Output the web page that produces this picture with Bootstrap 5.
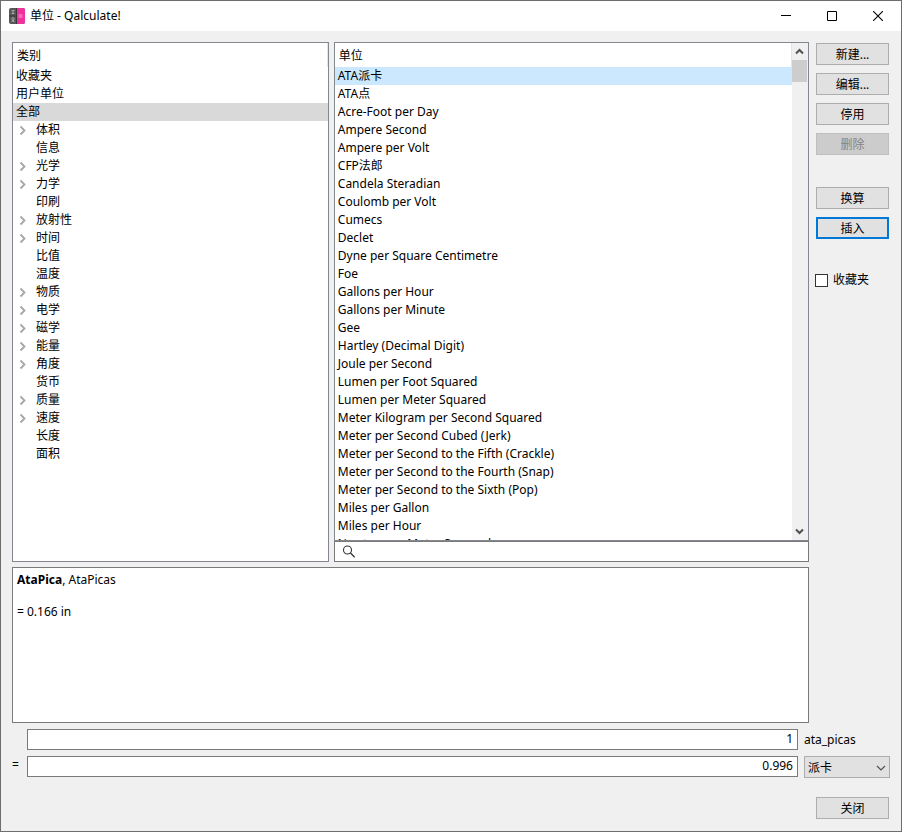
<!DOCTYPE html>
<html lang="zh-CN">
<head>
<meta charset="utf-8">
<meta name="viewport" content="width=device-width, initial-scale=1">
<title>单位 - Qalculate!</title>
<link href="https://cdn.jsdelivr.net/npm/bootstrap@5.3.0/dist/css/bootstrap.min.css" rel="stylesheet">
<style>
  body { font: 12px/18px "Noto Sans", "Noto Sans CJK SC", sans-serif; color: #000; background: #f0f0f0; }
  .window { border: 1px solid #6d6d6d; }
  .titlebar { height: 30px; background: #fff; padding-left: 8px; }
  .app-title { padding-left: 5px; }
  .caption-btn { width: 46px; height: 30px; border: 0; background: transparent; padding: 0; }
  .content { padding: 11px 12px 12px 11px; }
  .main-area { gap: 7px; }
  .panes { display: grid; grid-template-columns: minmax(0, 2fr) minmax(0, 3fr); grid-template-rows: minmax(0, 1fr); column-gap: 5px; }
  .pane { background: #fff; border: 1px solid #828790; }
  .heading { font: inherit; height: 24px; padding: 4px 4px 0; margin: 0; border-right: 1px solid #e5e5e5; }
  .rows .list-group-item { height: 18px; line-height: 18px; padding: 0 3px; border: 0; color: #000; background: #fff; white-space: nowrap; flex: none; display: flex; align-items: center; }
  .rows .picked { background: #cce8ff; }
  .rows .picked-muted { background: #d9d9d9; }
  .rows .twig { width: 20px; height: 18px; flex: none; }
  .scroller { width: 16px; background: #f0f0f0; }
  .scroller button { height: 17px; border: 0; padding: 0; background: transparent; display: flex; justify-content: center; align-items: center; }
  .thumb { height: 22px; background: #cdcdcd; margin-right: 1px; }
  .search { height: 21px; background: #fff; border: 1px solid #7a7a7a; padding: 0 7px; }
  .search input { border: 0; outline: 0; min-width: 0; height: 17px; padding: 0 4px; }
  .side { width: 73px; gap: 8px; padding-top: 1px; }
  .cmd { height: 22px; padding: 1px 0 0; font-size: 12px; line-height: 18px; color: #000; background: #e1e1e1; border: 1px solid #adadad; border-radius: 0; width: 73px; }
  .cmd:disabled { color: #838383; background: #ccc; border-color: #bfbfbf; opacity: 1; }
  .cmd-default { border: 2px solid #0078d7; }
  .convert-gap { margin-top: 24px; }
  .fav { margin: 24px 0 0 -1px; gap: 5px; }
  .fav input { appearance: none; width: 13px; height: 13px; background: #fff; border: 1px solid #333; margin: 0; }
  .fav input:checked { background: #0078d7; }
  .details { height: 156px; background: #fff; border: 1px solid #7a7a7a; padding: 4px; margin: 5px 80px 6px 0; line-height: 16px; }
  .conv { display: grid; grid-template-columns: 15px minmax(0, 1fr) 86px; row-gap: 6px; margin-right: 5px; }
  .conv .value { height: 21px; border: 1px solid #7a7a7a; border-radius: 0; background: #fff; padding: 0 4px 2px; font-size: 12px; line-height: 18px; color: #000; text-align: right; min-width: 0; }
  .conv .unit { margin-left: 6px; width: 86px; }
  .conv label.unit { padding-top: 2px; }
  .conv select { appearance: none; height: 22px; border: 1px solid #adadad; border-radius: 0; padding: 1px 3px 0; font-size: 12px; line-height: 18px; color: #000; background: #e1e1e1; width: 100%; }
  .conv .arrow { right: 4px; top: 7px; pointer-events: none; }
  .closing { margin-top: 19px; }
  svg { display: block; }
</style>
<script src="https://cdn.jsdelivr.net/npm/bootstrap@5.3.0/dist/js/bootstrap.bundle.min.js"></script>
</head>
<body>
<div class="window vh-100 d-flex flex-column overflow-hidden">
  <header class="titlebar d-flex align-items-center flex-shrink-0">
    <svg width="16" height="16" viewBox="0 0 16 16" aria-hidden="true">
      <rect width="16" height="16" rx="2" fill="#565656"/>
      <path d="M8 0h6a2 2 0 0 1 2 2v12a2 2 0 0 1-2 2H8z" fill="#f0309c"/>
      <path d="M0 8h8M7.500 0v16" stroke="#383838"/>
      <path d="M2.500 2.500h3M4 2.500v3M2.500 5.500h3M2.500 13.500h1v-1.500c-1-1-.5-2.500.5-2.500s1.500 1.500.5 2.500v1.500h1" fill="none" stroke="#bbb" stroke-width=".8"/>
      <path d="M9.500 7h4M9.500 9h4" stroke="#ff9ed4"/>
    </svg>
    <span class="app-title me-auto">单位 - Qalculate!</span>
    <button class="caption-btn d-flex align-items-center justify-content-center" aria-label="最小化"><svg width="10" height="10"><path d="M0 4.500h10" stroke="#000"/></svg></button>
    <button class="caption-btn d-flex align-items-center justify-content-center" aria-label="最大化"><svg width="10" height="10"><path d="M.5.5h9v9h-9z" fill="none" stroke="#000"/></svg></button>
    <button class="caption-btn d-flex align-items-center justify-content-center" aria-label="关闭窗口"><svg width="10" height="10"><path d="M0 0l10 10M10 0L0 10" stroke="#000" stroke-width="1.100"/></svg></button>
  </header>

  <main class="content d-flex flex-column flex-grow-1 overflow-hidden">
    <div class="main-area d-flex flex-grow-1 overflow-hidden">
      <div class="panes flex-grow-1">
        <section class="pane overflow-hidden">
          <h2 class="heading">类别</h2>
          <div class="rows list-group rounded-0" id="categories"></div>
        </section>
        <section class="d-flex flex-column">
          <div class="pane d-flex flex-grow-1 overflow-hidden">
            <div class="flex-grow-1 overflow-hidden">
              <h2 class="heading">单位</h2>
              <div class="rows list-group rounded-0" id="units"></div>
            </div>
            <div class="scroller d-flex flex-column flex-shrink-0">
              <button aria-label="向上滚动"><svg width="9" height="7"><path d="M1 5.500l3.500-3.500L8 5.500" fill="none" stroke="#505050" stroke-width="2"/></svg></button>
              <div class="thumb"></div>
              <button class="mt-auto" aria-label="向下滚动"><svg width="9" height="7"><path d="M1 1.500L4.500 5 8 1.500" fill="none" stroke="#505050" stroke-width="2"/></svg></button>
            </div>
          </div>
          <div class="search d-flex align-items-center flex-shrink-0">
            <svg width="14" height="14" aria-hidden="true"><circle cx="5.500" cy="5" r="4" fill="none" stroke="#333" stroke-width="1.100"/><path d="M8.500 8l4.200 4.200" stroke="#333" stroke-width="1.300"/></svg>
            <input class="flex-grow-1" type="text" aria-label="搜索">
          </div>
        </section>
      </div>
      <div class="side d-flex flex-column flex-shrink-0">
        <button class="btn cmd">新建...</button>
        <button class="btn cmd">编辑...</button>
        <button class="btn cmd">停用</button>
        <button class="btn cmd" disabled>删除</button>
        <button class="btn cmd convert-gap">换算</button>
        <button class="btn cmd cmd-default">插入</button>
        <div class="fav d-flex align-items-center">
          <input type="checkbox" id="favorite"><label for="favorite">收藏夹</label>
        </div>
      </div>
    </div>

    <section class="details flex-shrink-0"><b>AtaPica</b>, AtaPicas<br><br>= 0.166 in</section>

    <div class="conv flex-shrink-0">
      <span></span>
      <input class="value" id="from" type="text" value="1">
      <label class="unit" for="from">ata_picas</label>
      <label for="to">=</label>
      <input class="value" id="to" type="text" value="0.996">
      <div class="unit position-relative">
        <select aria-label="目标单位"><option>派卡</option></select>
        <svg class="arrow position-absolute" width="10" height="10"><path d="M1 3l4 4 4-4" fill="none" stroke="#505050" stroke-width="1.200"/></svg>
      </div>
    </div>
    <div class="closing d-flex justify-content-end flex-shrink-0"><button class="btn cmd">关闭</button></div>
  </main>
</div>
<script>
  const twig = open => '<span class="twig">' + (open ? '<svg width="20" height="18"><path d="M4.500 5.500l4 4-4 4" fill="none" stroke="#a6a6a6" stroke-width="1.800"/></svg>' : '') + '</span>';
  const row = (html, extra) => '<button type="button" class="list-group-item text-start ' + (extra || '') + '">' + html + '</button>';
  // A leading "+" marks a category that has subcategories.
  const categories = ['+体积', '信息', '+光学', '+力学', '印刷', '+放射性', '+时间', '比值', '温度', '+物质', '+电学', '+磁学', '+能量', '+角度', '货币', '+质量', '+速度', '长度', '面积'];
  document.getElementById('categories').innerHTML =
    row('收藏夹') + row('用户单位') + row('全部', 'picked-muted') +
    categories.map(c => row(twig(c[0] === '+') + c.replace('+', ''))).join('');
  const units = ['ATA派卡', 'ATA点', 'Acre-Foot per Day', 'Ampere Second', 'Ampere per Volt', 'CFP法郎', 'Candela Steradian', 'Coulomb per Volt', 'Cumecs', 'Declet', 'Dyne per Square Centimetre', 'Foe', 'Gallons per Hour', 'Gallons per Minute', 'Gee', 'Hartley (Decimal Digit)', 'Joule per Second', 'Lumen per Foot Squared', 'Lumen per Meter Squared', 'Meter Kilogram per Second Squared', 'Meter per Second Cubed (Jerk)', 'Meter per Second to the Fifth (Crackle)', 'Meter per Second to the Fourth (Snap)', 'Meter per Second to the Sixth (Pop)', 'Miles per Gallon', 'Miles per Hour', 'Newton per Meter Squared'];
  document.getElementById('units').innerHTML = units.map((u, i) => row(u, i ? '' : 'picked')).join('');
</script>
</body>
</html>
